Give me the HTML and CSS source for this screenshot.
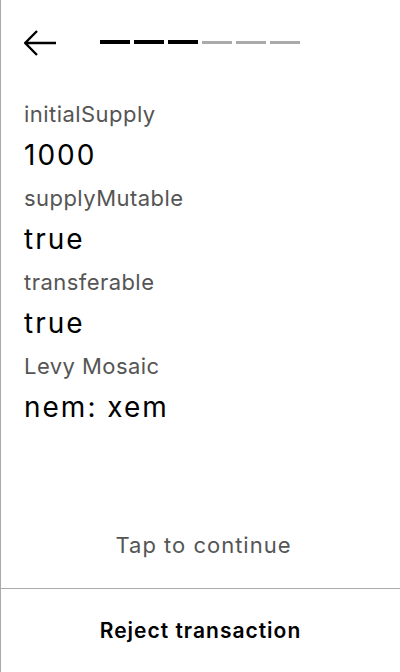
FILE: index.html
```html
<!DOCTYPE html>
<html lang="en">
<head>
<meta charset="utf-8">
<title>Transaction</title>
<link rel="stylesheet" href="styles.css">
</head>
<body>
<div class="screen">
  <div class="main">
    <div class="header">
      <svg class="back" width="32" height="32" viewBox="0 0 32 32" aria-label="Back">
        <path d="M13 3 L1.2 15 L13 27 M1.2 15 H32" fill="none" stroke="#000" stroke-width="2.4"/>
      </svg>
      <div class="progress">
        <span class="bar done"></span>
        <span class="bar done"></span>
        <span class="bar done"></span>
        <span class="bar"></span>
        <span class="bar"></span>
        <span class="bar"></span>
      </div>
    </div>
    <div class="fields">
      <div class="field">
        <div class="label">initialSupply</div>
        <div class="value">1000</div>
      </div>
      <div class="field">
        <div class="label">supplyMutable</div>
        <div class="value">true</div>
      </div>
      <div class="field">
        <div class="label">transferable</div>
        <div class="value">true</div>
      </div>
      <div class="field">
        <div class="label">Levy Mosaic</div>
        <div class="value">nem: xem</div>
      </div>
    </div>
  </div>
  <div class="tap">Tap to continue</div>
  <div class="footer">
    <div class="reject">Reject transaction</div>
  </div>
</div>
</body>
</html>
```
FILE: styles.css
```css
html, body {
  margin: 0;
  padding: 0;
  background: #fff;
}
body {
  font-family: Inter, "Noto Sans", sans-serif;
  color: #000;
}
.screen {
  box-sizing: border-box;
  width: 400px;
  height: 672px;
  border-left: 1px solid #aaa;
  display: flex;
  flex-direction: column;
}
.main {
  flex: 1;
}
.header {
  display: flex;
  align-items: center;
  height: 32px;
  padding: 28px 0 0 23px;
}
.back {
  display: block;
}
.progress {
  display: flex;
  align-items: flex-end;
  gap: 4px;
  height: 4px;
  margin-left: 44px;
  margin-bottom: 4px;
}
.bar {
  display: block;
  width: 30px;
  height: 3px;
  background: #aaa;
}
.bar.done {
  height: 4px;
  background: #000;
}
.fields {
  margin-top: 40px;
  padding-left: 23px;
}
.field {
  display: flex;
  flex-direction: column;
}
.label {
  font-size: 22px;
  line-height: 28px;
  letter-spacing: 0.45px;
  color: #555;
  margin-bottom: 9px;
}
.value {
  font-size: 28px;
  line-height: 36px;
  letter-spacing: 2px;
  color: #000;
  margin-bottom: 11px;
}
.tap {
  text-align: center;
  font-size: 22px;
  line-height: 24px;
  letter-spacing: 1px;
  color: #555;
  padding: 0 0 31px 6px;
}
.footer {
  height: 84px;
  border-top: 1px solid #aaa;
  box-sizing: border-box;
  display: flex;
  align-items: center;
  justify-content: center;
}
.reject {
  font-size: 21px;
  line-height: 24px;
  letter-spacing: 1px;
  font-weight: 600;
  color: #000;
}
```
